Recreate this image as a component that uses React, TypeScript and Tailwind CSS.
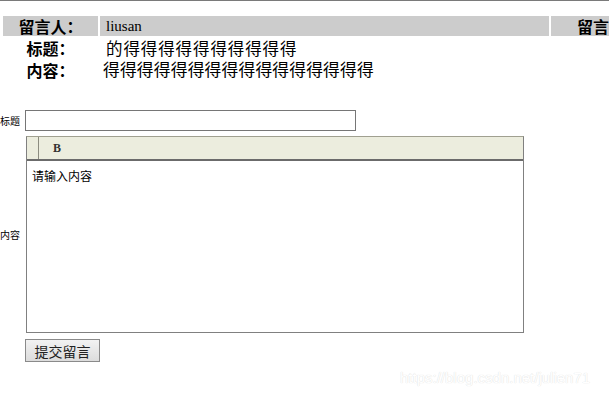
const CJK = "font-['SimSun','Noto_Sans_CJK_SC',sans-serif]"

function InfoRow({ label, value, gray }: { label: string; value: React.ReactNode; gray?: boolean }) {
  return (
    <div className="flex gap-[2px]">
      <div
        className={`flex h-[20px] w-[95px] shrink-0 items-center justify-center text-[16px] font-bold text-black ${gray ? "bg-[#cccccc]" : ""}`}
      >
        {label}
      </div>
      <div className={`flex h-[20px] w-[449px] shrink-0 items-center pl-[4px] text-black ${gray ? "bg-[#cccccc]" : ""}`}>
        {value}
      </div>
      {gray && (
        <div className="flex h-[20px] flex-1 items-center overflow-hidden bg-[#cccccc] pl-[26px] text-[16px] font-bold whitespace-nowrap">
          留言
        </div>
      )}
    </div>
  )
}

export default function App() {
  return (
    <div className={`relative h-[395px] w-[609px] overflow-hidden bg-white ${CJK}`}>
      <div className="h-[1px] w-full bg-[#7a7a7a]" />

      <div className="mt-[15px] flex flex-col gap-[2px] pl-[3px]">
        <InfoRow
          gray
          label="留言人："
          value={<span className="pl-[2px] font-['Liberation_Serif',serif] text-[15px]">liusan</span>}
        />
        <InfoRow
          label="标题："
          value={<span className="pl-[2px] text-[16.5px] tracking-[0.9px]">的得得得得得得得得得得</span>}
        />
        <InfoRow
          label="内容："
          value={<span className="-ml-[1px] text-[16.8px] tracking-[0.15px]">得得得得得得得得得得得得得得得得</span>}
        />
      </div>

      <form className="mt-[30px] flex flex-col">
        <div className="flex items-center">
          <label className="w-[25px] text-[10px] leading-none text-black">标题</label>
          <input className="h-[21px] w-[331px] border border-[#767676] bg-white px-1 text-[12px] outline-none" />
        </div>

        <div className="mt-[5px] flex items-center">
          <label className="w-[26px] text-[10px] leading-none text-black">内容</label>
          <div className="flex h-[197px] w-[498px] flex-col border border-[#808080] border-t-[#a0a090]">
            <div className="flex h-[24px] shrink-0 items-stretch border-b-2 border-b-[#6b6b6b] bg-[#ecedde]">
              <div className="w-[12px] border-r border-[#8c8c80]" />
              <div className="flex items-center pl-[14px] font-['Liberation_Serif',serif] text-[12px] font-bold text-[#333]">
                B
              </div>
            </div>
            <div className="flex-1 px-[5px] pt-[9px] text-[12px] leading-none text-black">请输入内容</div>
          </div>
        </div>

        <div className="mt-[6px] flex pl-[25px]">
          <button
            type="button"
            className="h-[23px] w-[75px] border border-[#8a8a8a] bg-gradient-to-b from-[#f2f2f2] to-[#dcdcdc] text-[14px] leading-none text-[#222]"
          >
            提交留言
          </button>
        </div>
      </form>

      <div className="absolute left-[400px] top-[367px] font-['Liberation_Sans',sans-serif] text-[15px] text-white [text-shadow:0_0_1px_#e2e2e2,0_0_1px_#e2e2e2]">
        https://blog.csdn.net/julien71
      </div>
    </div>
  )
}
